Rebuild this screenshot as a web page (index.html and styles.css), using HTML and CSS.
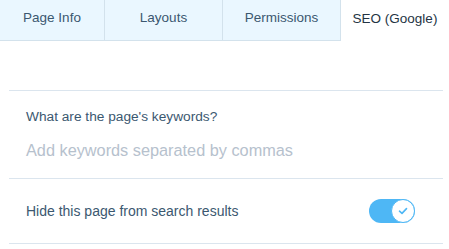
FILE: index.html
```html
<!DOCTYPE html>
<html lang="en">
<head>
  <meta charset="UTF-8">
  <title>Page Settings - SEO</title>
  <link rel="stylesheet" href="styles.css">
</head>
<body>
  <div class="tabs">
    <div class="tab tab-info">Page Info</div>
    <div class="tab tab-layouts">Layouts</div>
    <div class="tab tab-perms">Permissions</div>
    <div class="tab tab-active">SEO (Google)</div>
  </div>

  <div class="panel">
    <div class="section section-keywords">
      <div class="label">What are the page's keywords?</div>
      <div class="placeholder">Add keywords separated by commas</div>
    </div>
    <div class="section section-hide">
      <div class="label">Hide this page from search results</div>
      <div class="toggle">
        <div class="knob">
          <svg width="10" height="8" viewBox="0 0 10 8">
            <path d="M1.5 4.2 L4 6.4 L8.5 1.6" fill="none" stroke="#4eb7f5" stroke-width="1.6" stroke-linecap="round" stroke-linejoin="round"/>
          </svg>
        </div>
      </div>
    </div>
  </div>
</body>
</html>
```

FILE: styles.css
```css
* {
  margin: 0;
  padding: 0;
  box-sizing: border-box;
}

body {
  background: #fff;
  font-family: "Liberation Sans", Arial, sans-serif;
  color: #3b5870;
  width: 449px;
  height: 249px;
  overflow: hidden;
}

.tabs {
  display: flex;
  height: 41px;
}

.tab {
  height: 41px;
  display: flex;
  align-items: center;
  justify-content: center;
  font-size: 13.5px;
  background: #eaf7ff;
  border-right: 1px solid #d3e2ec;
  border-bottom: 1px solid #d3e2ec;
  padding-bottom: 5px;
}

.tab-info { width: 105px; }
.tab-layouts { width: 118px; }
.tab-perms { width: 118px; }

.tab-active {
  flex: 1;
  background: #fff;
  border-right: none;
  border-bottom: none;
  color: #243444;
}

.panel {
  margin: 49px 6px 0 9px;
  border-top: 1px solid #dbe5ee;
}

.section {
  border-bottom: 1px solid #dbe5ee;
  padding-left: 17px;
}

.section-keywords {
  height: 88px;
  padding-top: 17px;
}

.section-keywords .label {
  font-size: 13.7px;
  line-height: 18px;
}

.placeholder {
  margin-top: 14px;
  font-size: 16.3px;
  line-height: 20px;
  color: #b6c1cd;
}

.section-hide {
  height: 65px;
  display: flex;
  align-items: center;
  justify-content: space-between;
  padding-right: 28px;
}

.section-hide .label {
  font-size: 14px;
}

.toggle {
  width: 46px;
  height: 24px;
  border-radius: 12px;
  background: #4eb7f5;
  position: relative;
}

.knob {
  position: absolute;
  right: 0;
  top: 0;
  width: 24px;
  height: 24px;
  border-radius: 50%;
  background: #fff;
  border: 1px solid #4eb7f5;
  display: flex;
  align-items: center;
  justify-content: center;
}
```
